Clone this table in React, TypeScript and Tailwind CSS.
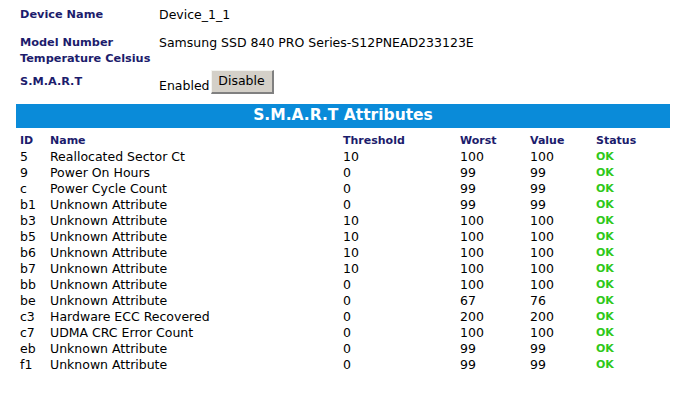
import React from "react";

const rows: [string, string, string, string, string][] = [
  ["5", "Reallocated Sector Ct", "10", "100", "100"],
  ["9", "Power On Hours", "0", "99", "99"],
  ["c", "Power Cycle Count", "0", "99", "99"],
  ["b1", "Unknown Attribute", "0", "99", "99"],
  ["b3", "Unknown Attribute", "10", "100", "100"],
  ["b5", "Unknown Attribute", "10", "100", "100"],
  ["b6", "Unknown Attribute", "10", "100", "100"],
  ["b7", "Unknown Attribute", "10", "100", "100"],
  ["bb", "Unknown Attribute", "0", "100", "100"],
  ["be", "Unknown Attribute", "0", "67", "76"],
  ["c3", "Hardware ECC Recovered", "0", "200", "200"],
  ["c7", "UDMA CRC Error Count", "0", "100", "100"],
  ["eb", "Unknown Attribute", "0", "99", "99"],
  ["f1", "Unknown Attribute", "0", "99", "99"],
];

const cols = "grid grid-cols-[30px_293px_117px_70px_66px_1fr]";

export default function App() {
  return (
    <div className="w-[692px] h-[400px] bg-white text-black font-['DejaVu_Sans',Verdana,sans-serif] overflow-hidden">
      <div className="pl-[20px] pt-[6px]">
        <div className="grid grid-cols-[139px_1fr] h-[16px] items-center">
          <div className="text-[11.3px] font-bold text-[#1c1c6c]">Device Name</div>
          <div className="text-[12.5px]">Device_1_1</div>
        </div>
        <div className="grid grid-cols-[139px_1fr] h-[16px] items-center mt-[12px]">
          <div className="text-[11.3px] font-bold text-[#1c1c6c]">Model Number</div>
          <div className="text-[12.5px]">Samsung SSD 840 PRO Series-S12PNEAD233123E</div>
        </div>
        <div className="h-[16px] flex items-center mt-[1px]">
          <div className="text-[11.3px] font-bold text-[#1c1c6c]">Temperature Celsius</div>
        </div>
        <div className="grid grid-cols-[139px_1fr] h-[24px] mt-[3px]">
          <div className="text-[11.3px] font-bold text-[#1c1c6c] self-center">S.M.A.R.T</div>
          <div className="flex items-end">
            <span className="text-[12.5px] leading-[14px] mb-[1px]">Enabled</span>
            <button className="ml-[1px] w-[63px] h-[24px] bg-[#d4d0c8] border-t border-l border-t-[#f4f4f0] border-l-[#f4f4f0] border-r-2 border-b-2 border-r-[#808080] border-b-[#808080] text-[12.5px] leading-[18px] pb-[2px]">
              Disable
            </button>
          </div>
        </div>
      </div>
      <div className="mx-[16px] w-[654px] mt-[10px] h-[24px] bg-[#0a8bd9] flex items-center justify-center text-white font-bold text-[15.5px]">
        S.M.A.R.T Attributes
      </div>
      <div className="pl-[20px] pt-[5px]">
        <div className={`${cols} h-[15px] items-center text-[11px] font-bold text-[#1c1c6c]`}>
          <div>ID</div>
          <div>Name</div>
          <div>Threshold</div>
          <div>Worst</div>
          <div>Value</div>
          <div>Status</div>
        </div>
        {rows.map((r, i) => (
          <div key={i} className={`${cols} h-[16px] items-center text-[12.5px]`}>
            <div>{r[0]}</div>
            <div>{r[1]}</div>
            <div>{r[2]}</div>
            <div>{r[3]}</div>
            <div>{r[4]}</div>
            <div className="text-[11px] font-bold text-[#2ec81a]">OK</div>
          </div>
        ))}
      </div>
    </div>
  );
}
